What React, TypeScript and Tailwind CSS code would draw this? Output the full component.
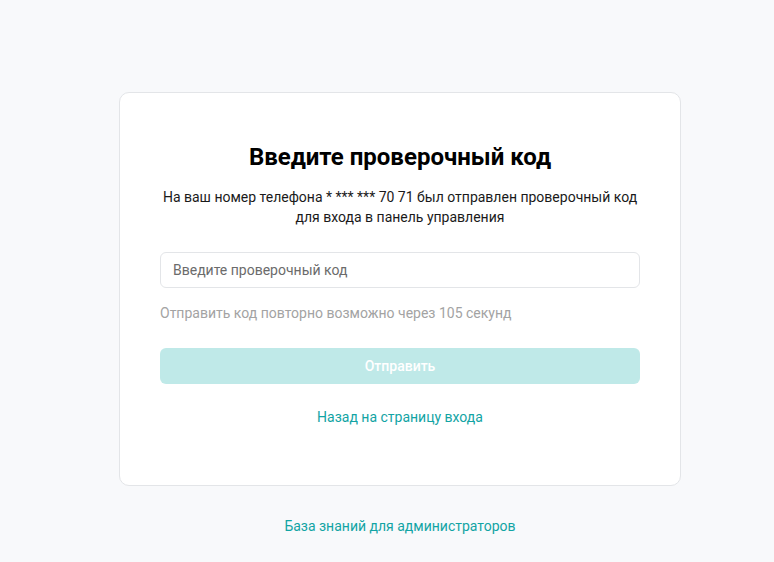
import React from "react";

const App: React.FC = () => (
  <div className="h-screen overflow-hidden bg-[#f8f9fb]" style={{ fontFamily: "Roboto, 'Noto Sans', sans-serif" }}>
    <div className="w-[800px] pt-[92px]">
      <div className="mx-auto w-[562px] rounded-[10px] border border-[#e3e5e8] bg-white px-10 pt-[50px] pb-[58px]">
        <h1 className="text-center text-2xl leading-7 font-bold text-black">Введите проверочный код</h1>
        <p className="mt-4 text-center text-sm leading-5 text-[#1a1a1a]">
          На ваш номер телефона * *** *** 70 71 был отправлен проверочный код
          <br />
          для входа в панель управления
        </p>
        <input
          type="text"
          placeholder="Введите проверочный код"
          className="mt-[25px] block h-9 w-full rounded-md border border-[#e3e5e8] px-3 text-sm text-[#333] placeholder:text-[#6b6b6b] outline-none"
        />
        <p className="mt-[15px] text-sm leading-5 text-[#a3a3a3]">Отправить код повторно возможно через 105 секунд</p>
        <button
          type="button"
          disabled
          className="mt-[25px] flex h-9 w-full items-center justify-center rounded-md bg-[#bfe9e8] text-sm font-medium text-white"
        >
          Отправить
        </button>
        <div className="mt-[23px] text-center text-sm leading-5">
          <a href="#" className="text-[#12a4a4]">Назад на страницу входа</a>
        </div>
      </div>
      <div className="mt-[30px] text-center text-sm leading-5">
        <a href="#" className="text-[#12a4a4]">База знаний для администраторов</a>
      </div>
    </div>
  </div>
);

export default App;
